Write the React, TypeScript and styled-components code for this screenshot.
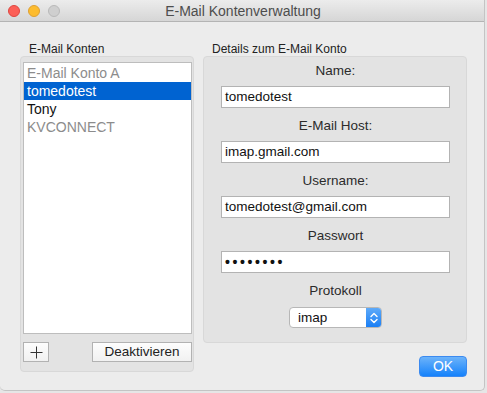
import React from "react";
import styled, { createGlobalStyle } from "styled-components";

const GlobalStyle = createGlobalStyle`
  html, body {
    margin: 0;
    padding: 0;
    background: #e6e6e6;
  }
  body {
    font-family: "Liberation Sans", Arial, sans-serif;
    font-size: 13px;
    color: #1a1a1a;
  }
`;

const accounts = [
  { name: "E-Mail Konto A", state: "inactive" },
  { name: "tomedotest", state: "selected" },
  { name: "Tony", state: "active" },
  { name: "KVCONNECT", state: "inactive" },
];

const fields = [
  { label: "Name:", value: "tomedotest" },
  { label: "E-Mail Host:", value: "imap.gmail.com" },
  { label: "Username:", value: "tomedotest@gmail.com" },
  { label: "Passwort", value: "••••••••", secret: true },
];

const App = () => {
  return (
    <>
      <GlobalStyle />
      <Window>
        <TitleBar>
          <Lights>
            <Light $fill="#fc5f57" $edge="#de4640" />
            <Light $fill="#fdbc2e" $edge="#dea032" />
            <Light $fill="#cfcfcf" $edge="#b9b9b9" />
          </Lights>
          <Title>E-Mail Kontenverwaltung</Title>
        </TitleBar>
        <Body>
          <Column>
            <GroupLabel>E-Mail Konten</GroupLabel>
            <LeftGroup>
              <List>
                {accounts.map((a) => (
                  <Row key={a.name} $state={a.state}>
                    {a.name}
                  </Row>
                ))}
              </List>
              <ButtonRow>
                <SquareButton>
                  <svg width="13" height="13" viewBox="0 0 13 13">
                    <path d="M6.5 0.5v12M0.5 6.5h12" stroke="#333" strokeWidth="1" fill="none" />
                  </svg>
                </SquareButton>
                <PushButton>Deaktivieren</PushButton>
              </ButtonRow>
            </LeftGroup>
          </Column>
          <Column>
            <GroupLabel>Details zum E-Mail Konto</GroupLabel>
            <RightGroup>
              {fields.map((f) => (
                <Field key={f.label}>
                  <FieldLabel>{f.label}</FieldLabel>
                  <TextBox $secret={!!f.secret}>{f.value}</TextBox>
                </Field>
              ))}
              <Field>
                <FieldLabel>Protokoll</FieldLabel>
                <Select>
                  <SelectValue>imap</SelectValue>
                  <Stepper>
                    <svg width="8" height="12" viewBox="0 0 8 12">
                      <path
                        d="M1 4.5L4 1.5L7 4.5M1 7.5L4 10.5L7 7.5"
                        stroke="#fff"
                        strokeWidth="1.4"
                        fill="none"
                        strokeLinecap="round"
                        strokeLinejoin="round"
                      />
                    </svg>
                  </Stepper>
                </Select>
              </Field>
            </RightGroup>
            <Footer>
              <OkButton>OK</OkButton>
            </Footer>
          </Column>
        </Body>
      </Window>
    </>
  );
};

export default App;

const Window = styled.div`
  width: 485px;
  height: 391px;
  background: #ececec;
  border-right: 1px solid #c4c4c4;
  border-bottom: 1px solid #c4c4c4;
  border-radius: 0 0 5px 5px;
  box-sizing: border-box;
  overflow: hidden;
`;

const TitleBar = styled.div`
  position: relative;
  height: 22px;
  box-sizing: border-box;
  background: linear-gradient(#ececec, #d6d6d6);
  border-bottom: 1px solid #b4b4b4;
  display: flex;
  align-items: center;
  justify-content: center;
`;

const Lights = styled.div`
  position: absolute;
  left: 8px;
  top: 5px;
  display: flex;
  gap: 8px;
`;

const Light = styled.span<{ $fill: string; $edge: string }>`
  width: 12px;
  height: 12px;
  border-radius: 50%;
  box-sizing: border-box;
  background: ${(p) => p.$fill};
  border: 1px solid ${(p) => p.$edge};
`;

const Title = styled.div`
  font-size: 14px;
  color: #4d4d4d;
  margin-left: 2px;
`;

const Body = styled.div`
  display: flex;
  gap: 9px;
  padding: 21px 0 0 20px;
`;

const Column = styled.div`
  display: flex;
  flex-direction: column;
`;

const GroupLabel = styled.div`
  font-size: 12px;
  line-height: 13px;
  color: #222;
  padding-left: 9px;
`;

const LeftGroup = styled.div`
  width: 174px;
  height: 316px;
  box-sizing: border-box;
  background: #e3e3e3;
  border: 1px solid #d8d8d8;
  border-radius: 4px;
  padding: 5px 1px 9px 2px;
  display: flex;
  flex-direction: column;
`;

const List = styled.div`
  flex: 1;
  background: #fff;
  border: 1px solid #bdbdbd;
  padding-top: 1px;
`;

const Row = styled.div<{ $state: string }>`
  height: 18px;
  line-height: 18px;
  padding-left: 3px;
  font-size: 14px;
  background: ${(p) => (p.$state === "selected" ? "#0063d1" : "transparent")};
  color: ${(p) =>
    p.$state === "selected" ? "#fff" : p.$state === "inactive" ? "#8c8c8c" : "#111"};
`;

const ButtonRow = styled.div`
  display: flex;
  justify-content: space-between;
  margin-top: 8px;
`;

const SquareButton = styled.div`
  width: 26px;
  height: 20px;
  box-sizing: border-box;
  border: 1px solid #b2b2b2;
  background: linear-gradient(#fdfdfd, #f1f1f1);
  display: flex;
  align-items: center;
  justify-content: center;
`;

const PushButton = styled.div`
  width: 100px;
  height: 20px;
  box-sizing: border-box;
  border: 1px solid #b2b2b2;
  background: linear-gradient(#fdfdfd, #f1f1f1);
  font-size: 13.5px;
  line-height: 18px;
  text-align: center;
  color: #222;
`;

const RightGroup = styled.div`
  width: 264px;
  height: 287px;
  box-sizing: border-box;
  background: #e3e3e3;
  border: 1px solid #d8d8d8;
  border-radius: 4px;
  padding: 6px 16px 0 17px;
  display: flex;
  flex-direction: column;
  gap: 10px;
`;

const Field = styled.div`
  display: flex;
  flex-direction: column;
  align-items: center;
`;

const FieldLabel = styled.div`
  font-size: 13.5px;
  line-height: 16px;
  color: #2b2b2b;
  margin-bottom: 7px;
`;

const TextBox = styled.div<{ $secret: boolean }>`
  align-self: stretch;
  height: 22px;
  box-sizing: border-box;
  background: #fff;
  border: 1px solid #b3b3b3;
  padding-left: 3px;
  font-size: ${(p) => (p.$secret ? "14px" : "13.5px")};
  letter-spacing: ${(p) => (p.$secret ? "2.6px" : "0")};
  font-weight: ${(p) => (p.$secret ? "bold" : "normal")};
  line-height: 20px;
  color: #111;
`;

const Select = styled.div`
  width: 93px;
  height: 21px;
  box-sizing: border-box;
  display: flex;
  background: #fff;
  border: 1px solid #b7b7b7;
  border-radius: 4px;
  overflow: hidden;
  margin-top: 1px;
`;

const SelectValue = styled.div`
  flex: 1;
  padding-left: 8px;
  font-size: 13.5px;
  line-height: 19px;
  color: #111;
`;

const Stepper = styled.div`
  width: 15px;
  background: linear-gradient(#5eaaf9, #1a7ff5);
  display: flex;
  align-items: center;
  justify-content: center;
`;

const Footer = styled.div`
  display: flex;
  justify-content: flex-end;
  margin-top: 13px;
`;

const OkButton = styled.div`
  width: 48px;
  height: 21px;
  box-sizing: border-box;
  border-radius: 4px;
  border: 1px solid #3b8af0;
  background: linear-gradient(#6cb3fa, #1582fb);
  color: #fff;
  font-size: 14px;
  line-height: 19px;
  text-align: center;
`;
